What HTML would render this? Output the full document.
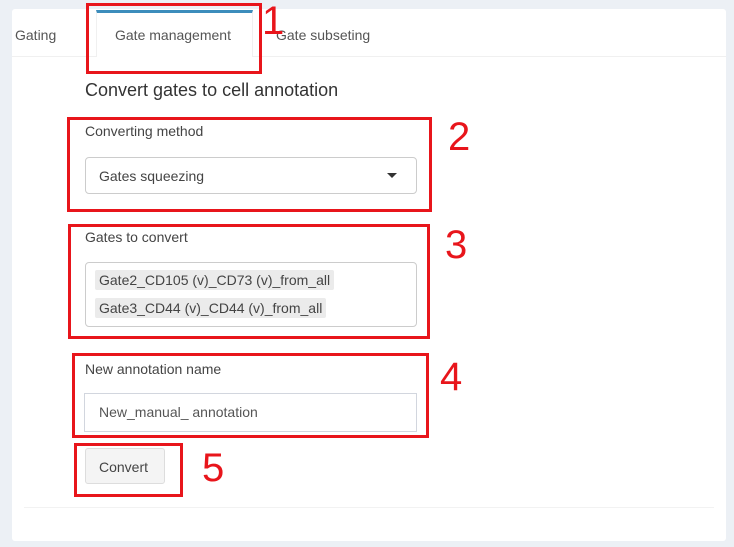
<!DOCTYPE html>
<html><head><style>
body{margin:0;width:734px;height:547px;background:#ecf0f5;font-family:"Liberation Sans",sans-serif;color:#333;position:relative;overflow:hidden}
.a{position:absolute}
.card{left:12px;top:9px;width:714px;height:532px;background:#fff;border-radius:3px}
.red{position:absolute;border:3px solid #e8151b;box-sizing:border-box}
.num{position:absolute;color:#e8151b;font-size:40px;line-height:40px}
.lbl{font-size:14px;color:#444}
.box{border:1px solid #ccc;border-radius:4px;box-sizing:border-box;background:#fff}
.chip{position:absolute;background:#ebebeb;font-size:14px;color:#444;padding:0 4px;height:20px;line-height:20px;border-radius:2px}
</style></head><body>
<div class="a card"></div>
<div class="a" style="left:12px;top:56px;width:714px;height:1px;background:#f0f0f0"></div>
<div class="a" style="left:96px;top:10px;width:157px;height:47px;background:#fff;border-top:3px solid #3c8dbc;border-left:1px solid #f0f0f0;border-right:1px solid #f0f0f0;box-sizing:border-box"></div>
<div class="a lbl" style="left:15px;top:27px;color:#555">Gating</div>
<div class="a lbl" style="left:115px;top:27px;color:#555">Gate management</div>
<div class="a lbl" style="left:276px;top:27px;color:#555">Gate subseting</div>
<div class="a" style="left:85px;top:80px;font-size:18px;color:#333">Convert gates to cell annotation</div>
<div class="a lbl" style="left:85px;top:123px">Converting method</div>
<div class="a box" style="left:85px;top:157px;width:332px;height:37px"></div>
<div class="a lbl" style="left:99px;top:168px">Gates squeezing</div>
<div class="a" style="left:387px;top:173px;width:0;height:0;border-left:5px solid transparent;border-right:5px solid transparent;border-top:5px solid #333"></div>
<div class="a lbl" style="left:85px;top:229px">Gates to convert</div>
<div class="a box" style="left:85px;top:262px;width:332px;height:65px"></div>
<div class="chip" style="left:95px;top:270px">Gate2_CD105 (v)_CD73 (v)_from_all</div>
<div class="chip" style="left:95px;top:298px">Gate3_CD44 (v)_CD44 (v)_from_all</div>
<div class="a lbl" style="left:85px;top:361px">New annotation name</div>
<div class="a" style="left:84px;top:393px;width:333px;height:39px;border:1px solid #d2d6de;box-sizing:border-box"></div>
<div class="a lbl" style="left:99px;top:404px;color:#555">New_manual_ annotation</div>
<div class="a" style="left:85px;top:448px;width:80px;height:36px;background:#f4f4f4;border:1px solid #ddd;border-radius:3px;box-sizing:border-box"></div>
<div class="a lbl" style="left:99px;top:459px">Convert</div>
<div class="a" style="left:24px;top:507px;width:690px;height:1px;background:#f2f2f2"></div>
<div class="red" style="left:86px;top:3px;width:176px;height:71px"></div>
<div class="num" style="left:262px;top:1px">1</div>
<div class="red" style="left:67px;top:117px;width:365px;height:95px"></div>
<div class="num" style="left:448px;top:117px">2</div>
<div class="red" style="left:68px;top:224px;width:362px;height:115px"></div>
<div class="num" style="left:445px;top:225px">3</div>
<div class="red" style="left:72px;top:353px;width:357px;height:85px"></div>
<div class="num" style="left:440px;top:357px">4</div>
<div class="red" style="left:74px;top:443px;width:109px;height:54px"></div>
<div class="num" style="left:202px;top:448px">5</div>
</body></html>
